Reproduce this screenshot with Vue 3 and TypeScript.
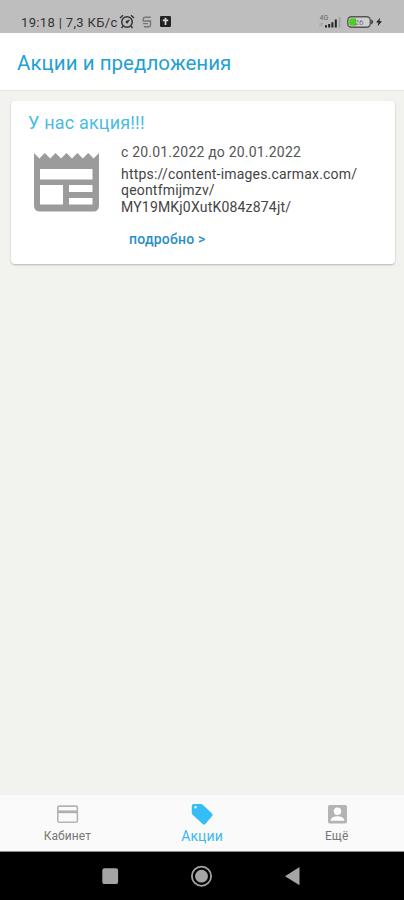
<script setup lang="ts">
import { ref } from 'vue'

type TabId = 'cabinet' | 'promo' | 'profile'

interface Offer {
  title: string
  period: string
  lines: string[]
}

const offers: Offer[] = [
  {
    title: 'У нас акция!!!',
    period: 'с 20.01.2022 до 20.01.2022',
    lines: ['https://content-images.carmax.com/', 'qeontfmijmzv/', 'MY19MKj0XutK084z874jt/'],
  },
]

const tabs: { id: TabId; label: string }[] = [
  { id: 'cabinet', label: 'Кабинет' },
  { id: 'promo', label: 'Акции' },
  { id: 'profile', label: 'Ещё' },
]

const active = ref<TabId>('promo')
</script>

<template>
  <div class="screen">
    <header class="status">
      <span class="clock">19:18 | 7,3 КБ/с</span>
      <svg class="alarm" width="16" height="15" viewBox="0 0 16 15" fill="none" stroke="#333" stroke-width="1.5">
        <circle cx="8" cy="8" r="5.3" />
        <circle cx="8" cy="8" r="1.4" fill="#333" stroke="none" />
        <path d="M8 8 10.4 6M1 4 4 1.3M15 4 12 1.3M3.8 12.2 2.6 14M12.2 12.2 13.4 14" />
      </svg>
      <svg class="sync" width="10" height="12" viewBox="0 0 10 12" fill="none" stroke="#777" stroke-width="1.4">
        <path d="M8.8 1.2H3Q1.3 1.2 1.3 3V5H8.5V9Q8.5 10.8 7 10.8H2M1 7.6H6" />
      </svg>
      <svg class="plus" width="11" height="11" viewBox="0 0 11 11">
        <rect width="11" height="11" rx="1.2" fill="#222" />
        <path d="M5.5 1.8V9M2.8 4.4H8.2" stroke="#d5d5d5" stroke-width="1.7" />
      </svg>
      <span class="grow"></span>
      <svg class="signal" width="25" height="15" viewBox="0 0 25 15">
        <text class="net" x="1.5" y="6">4G</text>
        <path d="M1 11.5H4.5M2 9.8H5" stroke="#999" stroke-width=".8" />
        <path d="M8 11.2V13.5M11.2 10V13.5M14.4 8.2V13.5M17.8 5.5V13.5" stroke="#222" stroke-width="2" />
        <path d="M21.6 3V13.5" stroke="#a2a2a2" stroke-width="1.8" />
      </svg>
      <svg class="battery" width="27" height="12" viewBox="0 0 27 12">
        <rect x=".8" y=".8" width="22.5" height="10.4" rx="3.6" fill="#d0d0d0" stroke="#555" stroke-width="1.4" />
        <path d="M4.3 2.2H9V9.8H4.3Q2.3 9.8 2.3 7.8V4.2Q2.3 2.2 4.3 2.2Z" fill="#4bd01f" />
        <path d="M24 3.6Q26.3 4 26.3 6T24 8.4Z" fill="#555" />
        <text class="level" x="7.5" y="8.9">26</text>
      </svg>
      <svg class="bolt" width="6" height="10" viewBox="0 0 7 10">
        <path d="M4.8 0 0 5.6H2.8L2 10 7 4.2H4Z" fill="#222" />
      </svg>
    </header>

    <div class="appbar"><h1>Акции и предложения</h1></div>

    <main class="content">
      <article v-for="offer in offers" :key="offer.title" class="card">
        <h2>{{ offer.title }}</h2>
        <div class="body">
          <svg class="news" width="65" height="60" viewBox="0 0 65 60">
            <path
              fill="#9b9b9b"
              fill-rule="evenodd"
              d="M0 0 5.4 5.4 10.8 0 16.2 5.4 21.6 0 27 5.4 32.5 0 38 5.4 43.4 0 48.8 5.4 54.2 0 59.6 5.4 65 0V52.5Q65 58.5 59 58.5H6Q0 58.5 0 52.5ZM6 16V26.5H58.5V16ZM6 32V51.5H29V32ZM35 32V39H58.5V32ZM35 45V51.5H58.5V45Z"
            />
          </svg>
          <div class="details">
            <p class="period">{{ offer.period }}</p>
            <p class="link">
              <span v-for="line in offer.lines" :key="line">{{ line }}</span>
            </p>
            <a class="expand">подробно &gt;</a>
          </div>
        </div>
      </article>
    </main>

    <nav class="tabs">
      <button v-for="tab in tabs" :key="tab.id" :class="['tab', { on: tab.id === active }]" @click="active = tab.id">
        <svg v-if="tab.id === 'cabinet'" width="24" height="24" viewBox="0 0 24 24">
          <rect x="2.8" y="4.1" width="19.6" height="16.2" rx="1.6" fill="none" stroke="#b4b4b4" stroke-width="1.6" />
          <path d="M2.5 9.8H22.5" stroke="#b0b0b0" stroke-width="2.8" />
        </svg>
        <svg v-else-if="tab.id === 'promo'" width="26" height="24" viewBox="0 0 26 24">
          <path
            fill="#36bdf5"
            fill-rule="evenodd"
            d="M2.8 4Q2.8 2 4.8 2H12Q13 2 13.8 2.7L23 11.4Q24.4 12.8 23 14.2L16.6 21.8Q15.2 23.4 13.7 21.9L3.6 12.8Q2.8 12 2.8 11ZM6.6 4A1.3 1.3 0 1 0 6.6 6.6 1.3 1.3 0 0 0 6.6 4Z"
          />
        </svg>
        <svg v-else width="24" height="24" viewBox="0 0 24 24">
          <rect x="3" y="3" width="19" height="18.5" rx="1.8" fill="#b4b4b4" />
          <circle cx="12.5" cy="9.2" r="3.7" fill="#fff" />
          <path d="M5.8 18.8V17.4Q7.5 14.2 12.5 14.2T19.2 17.4V18.8Z" fill="#fff" />
        </svg>
        <span>{{ tab.label }}</span>
      </button>
    </nav>

    <footer class="system">
      <svg width="404" height="48" viewBox="0 0 404 48" fill="#a5a5a5">
        <rect x="102.3" y="16.3" width="15.8" height="15.8" rx="2.2" />
        <circle cx="201.5" cy="24.2" r="9.6" fill="none" stroke="#a5a5a5" stroke-width="1.8" />
        <circle cx="201.5" cy="24.2" r="6.4" />
        <path d="M285 24.2 299.5 15V33.2Z" />
      </svg>
    </footer>
  </div>
</template>

<style>
body {
  background: #f2f2ee;
}
</style>

<style scoped>
.screen {
  box-sizing: border-box;
  width: 404px;
  height: 900px;
  display: flex;
  flex-direction: column;
  overflow: hidden;
  background: #f2f2ee;
  font-family: Roboto, 'Noto Sans', sans-serif;
}
h1, h2, p { margin: 0; font-weight: 400; white-space: nowrap; }
svg { display: block; flex: none; }
.status {
  box-sizing: border-box;
  height: 33px;
  flex: none;
  display: flex;
  align-items: flex-start;
  padding: 14px 22px 0 21px;
  background: #bebebe;
}
.clock {
  width: 98px;
  font-size: 13px;
  line-height: 18px;
  letter-spacing: 0.35px;
  color: #333;
  white-space: nowrap;
}
.sync { margin: 2px 0 0 7px; }
.plus { margin: 2px 0 0 8px; }
.grow { flex: 1; }
.battery { margin: 2px 0 0 4px; }
.bolt { margin: 3px 0 0 2px; }
.net { font-size: 7px; fill: #666; }
.level { font-size: 8px; fill: #777; }
.appbar {
  box-sizing: border-box;
  height: 58px;
  flex: none;
  padding: 17px 17px 0;
  background: #fff;
  border-bottom: 1px solid #e6e6e4;
}
h1 { font-size: 20.5px; line-height: 26px; letter-spacing: 0.05px; color: #249fd2; }
.content { flex: 1; padding: 10px 9px 0 11px; }
.card {
  box-sizing: border-box;
  height: 163px;
  padding: 10px 17px 0;
  background: #fff;
  border-radius: 4px;
  box-shadow: 0 1px 2px rgba(0, 0, 0, 0.25);
}
h2 { font-size: 18px; line-height: 24px; letter-spacing: 0.18px; color: #4abce5; }
.body { display: flex; padding: 7px 0 0 6px; }
.news { margin-top: 11px; }
.details { margin-left: 22px; display: flex; flex-direction: column; align-items: flex-start; }
.period { font-size: 14px; line-height: 20px; letter-spacing: 0.2px; color: #555; }
.link { padding-top: 4px; font-size: 14px; line-height: 16.3px; letter-spacing: 0.19px; color: #444; }
.link span { display: block; }
.expand { margin: 14px 0 0 8px; font-size: 14px; line-height: 20px; letter-spacing: 0.22px; font-weight: 500; color: #2b8ec5; white-space: nowrap; }
.tabs {
  box-sizing: border-box;
  height: 57px;
  flex: none;
  display: grid;
  grid-template-columns: repeat(3, 1fr);
  background: #fafafa;
  border-bottom: 1px solid #8a8a8a;
}
.tab {
  display: flex;
  flex-direction: column;
  align-items: center;
  padding: 7px 0 0;
  border: 0;
  background: none;
  font-family: inherit;
  font-size: 12px;
  line-height: 16px;
  letter-spacing: 0.1px;
  color: #777;
}
.tab span { margin-top: 2px; }
.tab.on { font-size: 14px; color: #3bb9eb; }
.system { height: 48px; flex: none; background: #000; }
</style>
